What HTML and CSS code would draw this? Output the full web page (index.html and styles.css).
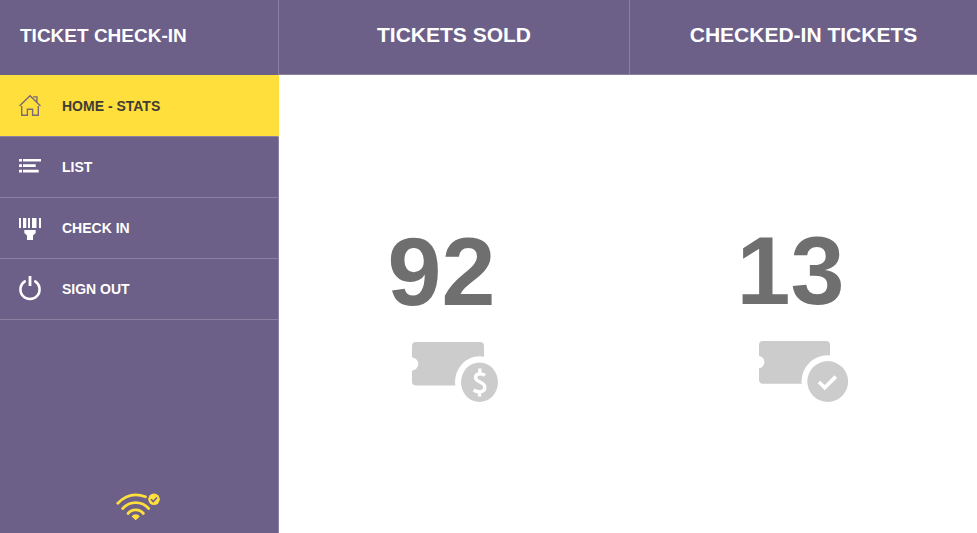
FILE: index.html
```html
<!DOCTYPE html>
<html lang="en">
<head>
    <meta charset="UTF-8">
    <meta name="viewport" content="width=device-width, initial-scale=1.0">
    <title>Ticket Check-In</title>
    <link rel="stylesheet" href="styles.css">
</head>
<body>
    <aside class="sidebar">
        <h1 class="brand">TICKET CHECK-IN</h1>
        <nav class="menu">
            <a href="#home" class="menu-item active">
                <svg class="menu-icon" viewBox="0 0 22 22" fill="none" stroke="#7b6a75" stroke-width="1.4">
                    <path d="M0.5 11L11 0.8L21.5 11M2.700 11V20.300H8.400V14.300H13.600V20.300H19.300V11M14.200 1.900H17.900V7"/>
                </svg>
                HOME - STATS
            </a>
            <a href="#list" class="menu-item">
                <svg class="menu-icon" viewBox="0 0 22 22" fill="#fff">
                    <path d="M0 3h3v2.600H0zM4 3h18v2.600H4zM0 8.300h3v2.600H0zM4 8.300h12.700v2.600H4zM0 13.800h3v2.600H0zM4 13.800h15.700v2.600H4z"/>
                </svg>
                LIST
            </a>
            <a href="#checkin" class="menu-item">
                <svg class="menu-icon" viewBox="0 0 22 22" fill="#fff">
                    <path d="M0 1h2v10H0zM4 1h3.300v10H4zM9 1h2v10H9zM13 1h4.500v10H13zM20 1h2v10H20z"/>
                    <path d="M5.300 13h11.400v3l-2.700 2.500V23H8v-4.500L5.300 16z"/>
                </svg>
                CHECK IN
            </a>
            <a href="#signout" class="menu-item">
                <svg class="menu-icon" viewBox="0 0 22 22" fill="none" stroke="#fff">
                    <path stroke-width="2.5" stroke-linecap="round" d="M5.800 3.400A9.600 9.600 0 1 0 16.200 3.400"/>
                    <path stroke-width="2.8" d="M11 -2V8"/>
                </svg>
                SIGN OUT
            </a>
        </nav>
        <div class="connection">
            <svg class="wifi" viewBox="0 0 44 29" role="img" aria-label="Online">
                <g fill="none" stroke="#ffdf3b" stroke-width="2.8" stroke-linecap="round">
                    <path d="M1.800 11.200C10.500 2.200 21 1.600 29.500 4.800"/>
                    <path d="M6.700 16.500C14 8.700 25.400 8.700 32.700 16.500"/>
                    <path d="M12 21.500C16 16.800 23.400 16.800 27.400 21.500"/>
                </g>
                <path fill="#ffdf3b" d="M15.700 24.500C17.500 21.500 21.900 21.500 23.700 24.500L19.700 28.300z"/>
                <circle cx="38" cy="7.300" r="5.800" fill="#ffdf3b"/>
                <path fill="none" stroke="#6c5f88" stroke-width="1.600" d="M35 7.300L37.200 9.500L41 5.500"/>
            </svg>
        </div>
    </aside>

    <main class="stats">
        <section class="stat">
            <h2 class="stat-title">TICKETS SOLD</h2>
            <div class="stat-body">
                <div class="stat-number">92</div>
                <svg class="stat-icon" viewBox="0 0 86 60">
                    <path fill="#ccc" d="M4 0H68Q72 0 72 4V39.500Q72 43.500 68 43.500H4Q0 43.500 0 39.500V28.500A6.300 6.500 0 0 0 0 15.500V4Q0 0 4 0z"/>
                    <ellipse cx="67.300" cy="40.300" rx="24.300" ry="26" fill="#fff"/>
                    <ellipse cx="67.500" cy="40.300" rx="18.500" ry="19.700" fill="#ccc"/>
                    <path fill="none" stroke="#fff" stroke-width="3.400" d="M72.900 33.500C70.500 31.200 63.500 31 63.500 35.500C63.500 40.500 72.800 39.500 72.800 45.200C72.800 50.600 65 50.600 61.700 47.900M67.800 26.500V31.500M67.500 49.500V54.500"/>
                </svg>
            </div>
        </section>
        <section class="stat">
            <h2 class="stat-title">CHECKED-IN TICKETS</h2>
            <div class="stat-body">
                <div class="stat-number">13</div>
                <svg class="stat-icon wide" viewBox="0 0 89 61">
                    <path fill="#ccc" d="M4 0H67Q71 0 71 4V38.800Q71 42.800 67 42.800H4Q0 42.800 0 38.800V27.300A6.200 6.200 0 0 0 0 15V4Q0 0 4 0z"/>
                    <circle cx="68.700" cy="40.500" r="26.200" fill="#fff"/>
                    <circle cx="68.700" cy="40.500" r="20.400" fill="#ccc"/>
                    <path fill="none" stroke="#fff" stroke-width="3.600" d="M60 41L65.700 46.600L76.800 35.600"/>
                </svg>
            </div>
        </section>
    </main>
</body>
</html>
```
FILE: styles.css
```css
* {
    box-sizing: border-box;
}
body {
    margin: 0;
    min-height: 100vh;
    display: flex;
    font-family: "Liberation Sans", Arial, sans-serif;
    font-weight: bold;
    background: #fff;
}
h1, h2 {
    margin: 0;
}
.sidebar {
    width: 279px;
    flex-shrink: 0;
    display: flex;
    flex-direction: column;
    background: #6c5f88;
    color: #fff;
}
.brand {
    height: 75px;
    padding: 0 20px;
    font-size: 19px;
    line-height: 71px;
    border-right: 1px solid #8a80a2;
}
.menu-item {
    display: flex;
    align-items: center;
    gap: 21px;
    height: 61px;
    padding: 0 19px;
    font-size: 14px;
    color: #fff;
    text-decoration: none;
    border-right: 1px solid #8a80a2;
    border-bottom: 1px solid #8a80a2;
}
.menu-item.active {
    height: 62px;
    background: #ffdf3b;
    color: #3f3c36;
    border-right-color: #ffdf3b;
}
.menu-icon {
    width: 22px;
    height: 22px;
    overflow: visible;
}
.connection {
    flex: 1;
    display: flex;
    align-items: flex-end;
    justify-content: center;
    padding: 0 2px 12px 0;
    border-right: 1px solid #8a80a2;
}
.wifi {
    width: 44px;
    height: 29px;
}
.stats {
    flex: 1;
    display: grid;
    grid-template-columns: 351fr 347fr;
}
.stat {
    display: flex;
    flex-direction: column;
}
.stat-title {
    height: 75px;
    font-size: 21px;
    line-height: 70px;
    text-align: center;
    background: #6c5f88;
    color: #fff;
    border-bottom: 1px solid #8a80a2;
}
.stat:first-child .stat-title {
    border-right: 1px solid #8a80a2;
}
.stat-body {
    flex: 1;
    display: flex;
    flex-direction: column;
    align-items: center;
    justify-content: center;
    padding-top: 16px;
}
.stat-number {
    margin-bottom: 22px;
    padding-right: 26px;
    font-size: 97px;
    line-height: 97px;
    color: #6f6f6f;
}
.stat-icon {
    width: 86px;
    height: 60px;
}
.stat-icon.wide {
    width: 89px;
    height: 61px;
}
```
